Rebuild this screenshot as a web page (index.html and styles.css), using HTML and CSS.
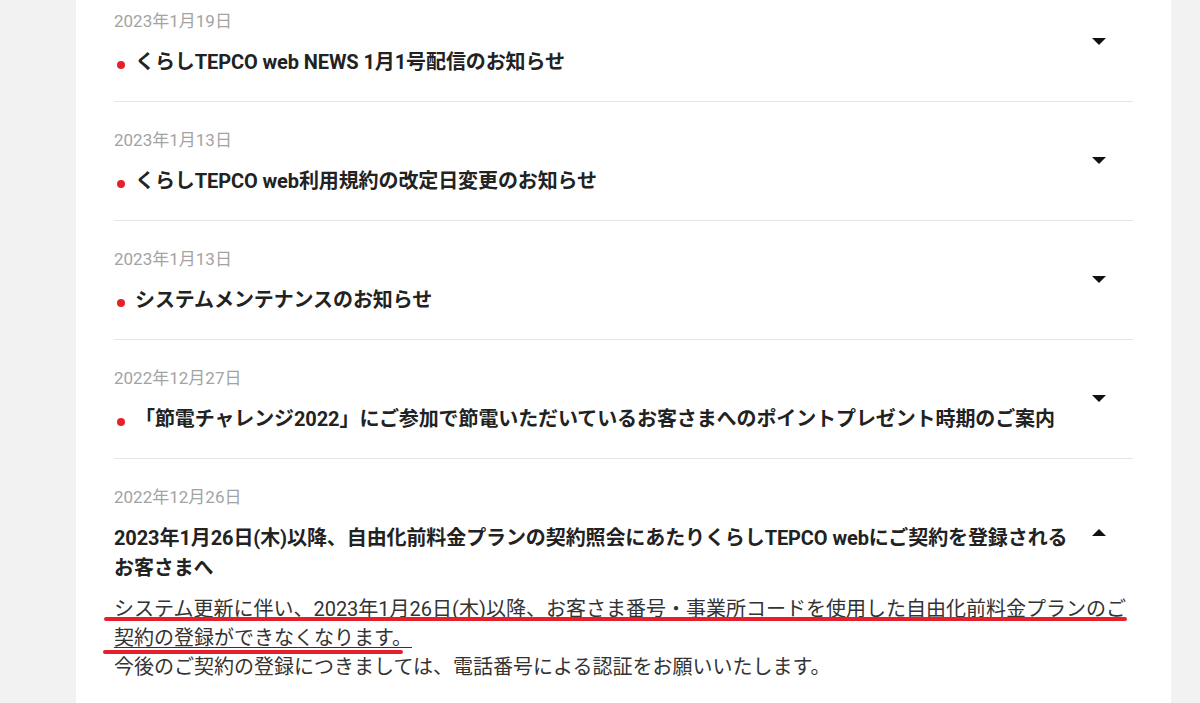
FILE: index.html
```html
<!DOCTYPE html>
<html lang="ja">
<head>
<meta charset="utf-8">
<title>お知らせ</title>
<link rel="stylesheet" href="styles.css">
</head>
<body>
<div class="page">
  <main class="panel">
    <ul class="news">
      <li class="item">
        <div class="head">
          <div class="head-text">
            <div class="date">2023年1月19日</div>
            <div class="title"><span class="dot"></span>くらしTEPCO web NEWS 1月1号配信のお知らせ</div>
          </div>
          <svg class="caret" width="14" height="7" viewBox="0 0 14 7"><path d="M0 0H14L7 7Z" fill="#111"/></svg>
        </div>
      </li>
      <li class="item">
        <div class="head">
          <div class="head-text">
            <div class="date">2023年1月13日</div>
            <div class="title"><span class="dot"></span>くらしTEPCO web利用規約の改定日変更のお知らせ</div>
          </div>
          <svg class="caret" width="14" height="7" viewBox="0 0 14 7"><path d="M0 0H14L7 7Z" fill="#111"/></svg>
        </div>
      </li>
      <li class="item">
        <div class="head">
          <div class="head-text">
            <div class="date">2023年1月13日</div>
            <div class="title"><span class="dot"></span>システムメンテナンスのお知らせ</div>
          </div>
          <svg class="caret" width="14" height="7" viewBox="0 0 14 7"><path d="M0 0H14L7 7Z" fill="#111"/></svg>
        </div>
      </li>
      <li class="item">
        <div class="head">
          <div class="head-text">
            <div class="date">2022年12月27日</div>
            <div class="title"><span class="dot"></span>「節電チャレンジ2022」にご参加で節電いただいているお客さまへのポイントプレゼント時期のご案内</div>
          </div>
          <svg class="caret" width="14" height="7" viewBox="0 0 14 7"><path d="M0 0H14L7 7Z" fill="#111"/></svg>
        </div>
      </li>
      <li class="item item-open">
        <div class="head">
          <div class="head-text">
            <div class="date">2022年12月26日</div>
            <div class="title">2023年1月26日(木)以降、自由化前料金プランの契約照会にあたりくらしTEPCO webにご契約を登録されるお客さまへ</div>
          </div>
          <svg class="caret" width="14" height="7" viewBox="0 0 14 7"><path d="M0 7H14L7 0Z" fill="#111"/></svg>
        </div>
        <div class="body">
          <p class="body-text"><span class="ul">システム更新に伴い、2023年1月26日(木)以降、お客さま番号・事業所コードを使用した自由化前料金プランのご契約の登録ができなくなります。</span><br>今後のご契約の登録につきましては、電話番号による認証をお願いいたします。</p>
          <span class="mark mark-1"></span>
          <span class="mark mark-2"></span>
        </div>
      </li>
    </ul>
  </main>
</div>
</body>
</html>
```

FILE: styles.css
```css
html, body {
  margin: 0;
  padding: 0;
}

body {
  background: #f2f2f2;
  font-family: Roboto, "Noto Sans CJK JP", sans-serif;
  color: #222;
  overflow: hidden;
}

.page {
  padding: 0 29px 0 76px;
}

.panel {
  background: #fff;
  min-height: 760px;
  padding: 0 38px;
  margin-top: -17px;
}

.news {
  list-style: none;
  margin: 0;
  padding: 0;
}

.item {
  padding: 25px 0 24px;
  border-bottom: 1px solid #e6e6e6;
}

.item-open {
  border-bottom: none;
}

.head {
  display: flex;
  align-items: center;
}

.head-text {
  flex: 1;
  min-width: 0;
}

.date {
  font-size: 17px;
  line-height: 26px;
  color: #a3a3a3;
}

.title {
  margin-top: 13px;
  font-size: 20px;
  line-height: 30px;
  font-weight: 700;
  color: #222;
  letter-spacing: -0.1px;
}

.dot {
  display: inline-block;
  width: 8px;
  height: 8px;
  border-radius: 50%;
  background: #e3232c;
  margin: 0 10px 0 3px;
  vertical-align: middle;
  position: relative;
  top: 1px;
}

.caret {
  flex: none;
  display: block;
  margin: -2px 27px 0 16px;
}

.body {
  position: relative;
  margin-top: 12px;
}

.body-text {
  margin: 0;
  font-size: 20px;
  line-height: 29px;
  color: #333;
  font-weight: 400;
}

.ul {
  text-decoration: underline;
  text-decoration-thickness: 1px;
  text-underline-offset: 2px;
}

.mark {
  position: absolute;
  height: 3.5px;
  background: #e3202b;
  border-radius: 2px;
}

.mark-1 {
  left: -10px;
  top: 22px;
  width: 1023px;
}

.mark-2 {
  left: -11px;
  top: 55px;
  width: 300px;
}
```
